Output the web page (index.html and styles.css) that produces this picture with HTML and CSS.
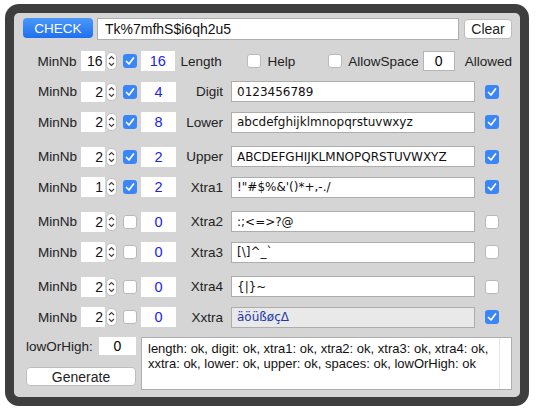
FILE: index.html
```
<!DOCTYPE html>
<html lang="en">
<head>
    <meta charset="UTF-8">
    <title>Password check</title>
    <link rel="stylesheet" href="styles.css">
</head>
<body>
<div class="frame">
    <div class="top">
        <button class="check">CHECK</button>
        <input class="pwd" type="text" value="Tk%7mfhS$i6qh2u5">
        <button class="clear">Clear</button>
    </div>

    <div class="rows">
        <!-- length row -->
        <div class="row">
            <span class="minnb">MinNb</span>
            <input class="num" value="16"><span class="spin"><svg width="9" height="16"><polyline points="2,6 4.5,3.5 7,6"/><polyline points="2,10 4.5,12.5 7,10"/></svg></span>
            <span class="cb on"><svg width="14" height="14"><polyline points="3.5,7.5 6,10 10.5,4"/></svg></span>
            <span class="count">16</span>
            <span class="lbl">Length</span>
            <span class="cb help"></span>
            <span class="txt help-txt">Help</span>
            <span class="cb allow"></span>
            <span class="txt allow-txt">AllowSpace</span>
            <input class="spaces" value="0">
            <span class="txt allowed">Allowed</span>
        </div>
        <div class="row">
            <span class="minnb">MinNb</span>
            <input class="num" value="2"><span class="spin"><svg width="9" height="16"><polyline points="2,6 4.5,3.5 7,6"/><polyline points="2,10 4.5,12.5 7,10"/></svg></span>
            <span class="cb on"><svg width="14" height="14"><polyline points="3.5,7.5 6,10 10.5,4"/></svg></span>
            <span class="count">4</span>
            <span class="lbl">Digit</span>
            <input class="chars" value="0123456789">
            <span class="cb on end"><svg width="14" height="14"><polyline points="3.5,7.5 6,10 10.5,4"/></svg></span>
        </div>
        <div class="row">
            <span class="minnb">MinNb</span>
            <input class="num" value="2"><span class="spin"><svg width="9" height="16"><polyline points="2,6 4.5,3.5 7,6"/><polyline points="2,10 4.5,12.5 7,10"/></svg></span>
            <span class="cb on"><svg width="14" height="14"><polyline points="3.5,7.5 6,10 10.5,4"/></svg></span>
            <span class="count">8</span>
            <span class="lbl">Lower</span>
            <input class="chars" value="abcdefghijklmnopqrstuvwxyz">
            <span class="cb on end"><svg width="14" height="14"><polyline points="3.5,7.5 6,10 10.5,4"/></svg></span>
        </div>
        <div class="row spaced">
            <span class="minnb">MinNb</span>
            <input class="num" value="2"><span class="spin"><svg width="9" height="16"><polyline points="2,6 4.5,3.5 7,6"/><polyline points="2,10 4.5,12.5 7,10"/></svg></span>
            <span class="cb on"><svg width="14" height="14"><polyline points="3.5,7.5 6,10 10.5,4"/></svg></span>
            <span class="count">2</span>
            <span class="lbl">Upper</span>
            <input class="chars" value="ABCDEFGHIJKLMNOPQRSTUVWXYZ">
            <span class="cb on end"><svg width="14" height="14"><polyline points="3.5,7.5 6,10 10.5,4"/></svg></span>
        </div>
        <div class="row">
            <span class="minnb">MinNb</span>
            <input class="num" value="1"><span class="spin"><svg width="9" height="16"><polyline points="2,6 4.5,3.5 7,6"/><polyline points="2,10 4.5,12.5 7,10"/></svg></span>
            <span class="cb on"><svg width="14" height="14"><polyline points="3.5,7.5 6,10 10.5,4"/></svg></span>
            <span class="count">2</span>
            <span class="lbl">Xtra1</span>
            <input class="chars" value="!&quot;#$%&amp;'()*+,-./">
            <span class="cb on end"><svg width="14" height="14"><polyline points="3.5,7.5 6,10 10.5,4"/></svg></span>
        </div>
        <div class="row spaced">
            <span class="minnb">MinNb</span>
            <input class="num" value="2"><span class="spin"><svg width="9" height="16"><polyline points="2,6 4.5,3.5 7,6"/><polyline points="2,10 4.5,12.5 7,10"/></svg></span>
            <span class="cb"></span>
            <span class="count">0</span>
            <span class="lbl">Xtra2</span>
            <input class="chars" value=":;&lt;=&gt;?@">
            <span class="cb end"></span>
        </div>
        <div class="row">
            <span class="minnb">MinNb</span>
            <input class="num" value="2"><span class="spin"><svg width="9" height="16"><polyline points="2,6 4.5,3.5 7,6"/><polyline points="2,10 4.5,12.5 7,10"/></svg></span>
            <span class="cb"></span>
            <span class="count">0</span>
            <span class="lbl">Xtra3</span>
            <input class="chars" value="[\]^_`">
            <span class="cb end"></span>
        </div>
        <div class="row spaced">
            <span class="minnb">MinNb</span>
            <input class="num" value="2"><span class="spin"><svg width="9" height="16"><polyline points="2,6 4.5,3.5 7,6"/><polyline points="2,10 4.5,12.5 7,10"/></svg></span>
            <span class="cb"></span>
            <span class="count">0</span>
            <span class="lbl">Xtra4</span>
            <input class="chars" value="{|}~">
            <span class="cb end"></span>
        </div>
        <div class="row">
            <span class="minnb">MinNb</span>
            <input class="num" value="2"><span class="spin"><svg width="9" height="16"><polyline points="2,6 4.5,3.5 7,6"/><polyline points="2,10 4.5,12.5 7,10"/></svg></span>
            <span class="cb"></span>
            <span class="count">0</span>
            <span class="lbl">Xxtra</span>
            <input class="chars xx" value="äöüßøçΔ">
            <span class="cb on end"><svg width="14" height="14"><polyline points="3.5,7.5 6,10 10.5,4"/></svg></span>
        </div>
    </div>

    <div class="bottom">
        <div class="left">
            <div class="loh">
                <span class="txt">lowOrHigh:</span>
                <input class="loh-val" value="0">
            </div>
            <button class="gen">Generate</button>
        </div>
        <div class="output">
            <p>length: ok, digit: ok, xtra1: ok, xtra2: ok, xtra3: ok, xtra4: ok, xxtra: ok, lower: ok, upper: ok, spaces: ok, lowOrHigh: ok</p>
            <span class="track"></span>
        </div>
    </div>
</div>
</body>
</html>
```

FILE: styles.css
```
body {
    margin: 0;
    background: #fff;
    font-family: "Liberation Sans", Arial, sans-serif;
    font-size: 13.5px;
    color: #222;
}

.frame {
    box-sizing: border-box;
    width: 524px;
    height: 402px;
    margin: 4px 0 0 5px;
    border: 9px solid #3e3e3e;
    border-radius: 14px;
    background: #d5d5d5;
    padding: 5px 8px 0 9px;
}

input {
    font-family: inherit;
    box-sizing: border-box;
    outline: none;
    margin: 0;
}

button {
    font-family: inherit;
    margin: 0;
    cursor: pointer;
}

/* top bar */
.top { display: flex; align-items: flex-start; height: 22px; }
.check {
    width: 70px;
    height: 20px;
    border: none;
    border-radius: 4px;
    background: linear-gradient(#4b98fa, #1f70ef);
    color: #fff;
    font-size: 13.5px;
    padding: 0;
}
.pwd {
    margin-left: 4px;
    width: 362px;
    height: 22px;
    border: 1px solid #adadad;
    background: #fff;
    font-size: 14px;
    padding: 0 7px;
    color: #111;
}
.clear {
    margin: 1px 0 0 5px;
    width: 48px;
    height: 20px;
    border: 1px solid #bdbdbd;
    border-radius: 4px;
    background: #fff;
    font-size: 14px;
    color: #222;
    padding: 0;
}

/* rows */
.rows { margin-top: 10px; display: flex; flex-direction: column; gap: 8.5px; }
.row { display: flex; align-items: center; height: 22px; padding-left: 12px; }
.row.spaced { margin-top: 4px; }

.minnb { width: 42px; text-align: right; }
.num {
    margin-left: 4px;
    width: 24px;
    height: 20px;
    border: none;
    background: #fff;
    text-align: right;
    font-size: 14px;
    padding: 0 2px 0 0;
    color: #111;
}
.spin {
    margin-left: 1px;
    width: 11px;
    height: 18px;
    box-sizing: border-box;
    border: 1px solid #c2c2c2;
    border-radius: 5px;
    background: #fff;
    display: flex;
    align-items: center;
    justify-content: center;
}
.spin polyline { fill: none; stroke: #444; stroke-width: 1.2; }

.cb {
    box-sizing: border-box;
    width: 14px;
    height: 14px;
    margin-left: 6px;
    border: 1px solid #b9b9b9;
    border-radius: 3px;
    background: #fff;
    display: flex;
}
.cb.on { border: none; background: #3a86f7; }
.cb polyline { fill: none; stroke: #fff; stroke-width: 1.7; stroke-linecap: round; stroke-linejoin: round; }

.count {
    margin-left: 4px;
    width: 35px;
    height: 20px;
    line-height: 20px;
    background: #fff;
    text-align: center;
    color: #1a22f0;
    font-size: 14.5px;
}
.lbl { margin-left: 4px; width: 43px; text-align: right; }
.chars {
    margin-left: 8px;
    width: 244px;
    height: 21px;
    border: 1px solid #adadad;
    background: #fff;
    font-family: "DejaVu Sans", Verdana, sans-serif;
    font-size: 12px;
    padding: 0 5px;
    color: #111;
}
.chars.xx { background: #e9e9e9; color: #2236a8; }
.cb.end { margin-left: 10px; }

.help { margin-left: 25px; }
.help-txt { margin-left: 7px; }
.allow { margin-left: 33px; }
.allow-txt { margin-left: 6px; }
.spaces {
    margin-left: 4px;
    width: 32px;
    height: 20px;
    border: 1px solid #b5b5b5;
    background: #fff;
    text-align: center;
    font-size: 14px;
    padding: 0;
}
.allowed { margin-left: 10px; }

/* bottom */
.bottom { display: flex; margin-top: 9px; padding-left: 3px; }
.left { width: 110px; }
.loh { display: flex; align-items: center; justify-content: space-between; }
.loh-val {
    width: 37px;
    height: 18px;
    border: none;
    background: #fff;
    text-align: center;
    font-size: 14px;
    padding: 0;
}
.gen {
    margin-top: 12px;
    width: 110px;
    height: 19px;
    border: 1px solid #bdbdbd;
    border-radius: 4px;
    background: #fff;
    font-size: 14px;
    color: #222;
    padding: 0;
}
.output {
    margin-left: 5px;
    width: 371px;
    height: 53px;
    box-sizing: border-box;
    border: 1px solid #adadad;
    background: #fff;
    display: flex;
}
.output p {
    margin: 0;
    flex: 1;
    padding: 3px 4px 0 6px;
    font-size: 13px;
    line-height: 15px;
    color: #111;
}
.track { width: 11px; border-left: 1px solid #e6e6e6; }
```
